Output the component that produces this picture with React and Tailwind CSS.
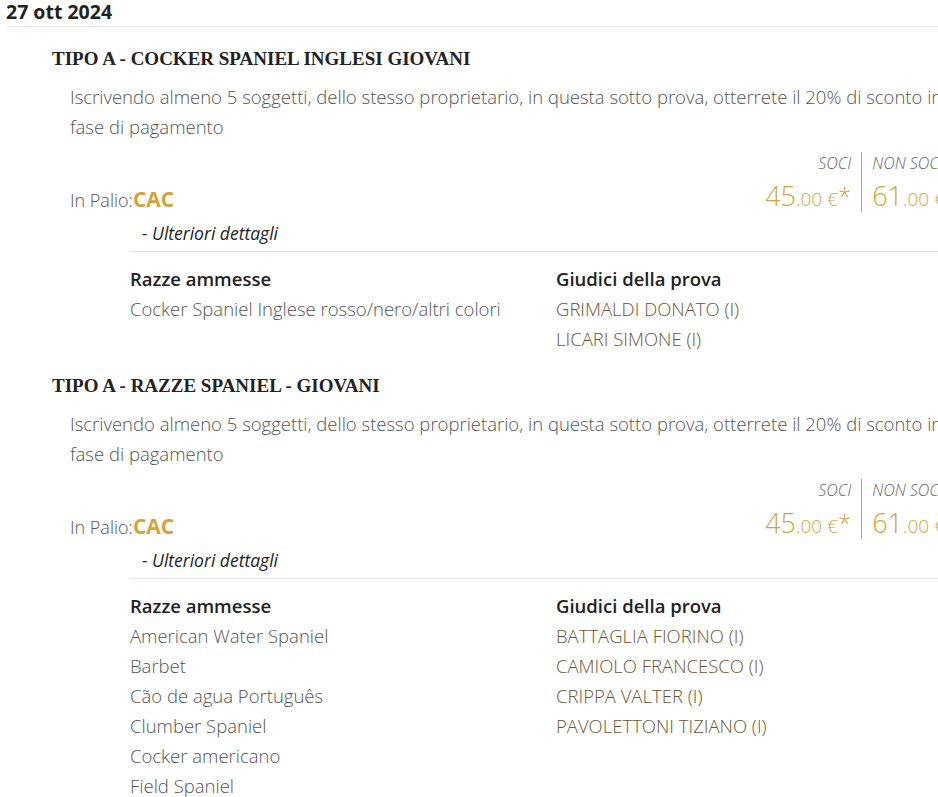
import React from 'react'

const sections = [
  {
    title: 'TIPO A - COCKER SPANIEL INGLESI GIOVANI',
    prize: 'CAC',
    soci: '45',
    nonSoci: '61',
    breeds: ['Cocker Spaniel Inglese rosso/nero/altri colori'],
    judges: ['GRIMALDI DONATO (I)', 'LICARI SIMONE (I)'],
  },
  {
    title: 'TIPO A - RAZZE SPANIEL - GIOVANI',
    prize: 'CAC',
    soci: '45',
    nonSoci: '61',
    breeds: [
      'American Water Spaniel',
      'Barbet',
      'Cão de agua Português',
      'Clumber Spaniel',
      'Cocker americano',
      'Field Spaniel',
    ],
    judges: [
      'BATTAGLIA FIORINO (I)',
      'CAMIOLO FRANCESCO (I)',
      'CRIPPA VALTER (I)',
      'PAVOLETTONI TIZIANO (I)',
    ],
  },
]

const Section = ({ data }) => (
  <section className="pl-[52px] pt-[19px]">
    <h3 className="text-[19px] leading-[26px] font-bold text-[#222] whitespace-nowrap" style={{ fontFamily: '"Liberation Serif", "DejaVu Serif", serif' }}>
      {data.title}
    </h3>
    <div className="pl-[18px] pt-[10px] text-[18.5px] leading-[30px] font-light text-[#555]">
      <p className="whitespace-nowrap">
        Iscrivendo almeno 5 soggetti, dello stesso proprietario, in questa sotto prova, otterrete il 20% di sconto in
        <br />
        fase di pagamento
      </p>
    </div>

    {/* In palio + prezzi */}
    <div className="flex items-end justify-between pl-[18px] pt-[10px]">
      <div className="flex items-baseline leading-[24px]">
        <span className="text-[18px] font-light text-[#555]">In Palio:</span>
        <span className="text-[21px] font-bold text-[#d4a43a]">{data.prize}</span>
      </div>
      <div className="flex h-[60px]">
        <div className="pr-[10px] flex flex-col items-end">
          <span className="pt-[1px] text-[16px] leading-[20px] italic font-light text-[#666] whitespace-nowrap">SOCI</span>
          <div className="mt-[7px] h-[32px] text-[#d4a43a] font-light leading-[32px] whitespace-nowrap">
            <span className="text-[27px]">{data.soci}</span>
            <span className="text-[19px]">.00 €</span>
            <span className="text-[24px] align-top leading-none relative top-[4px]">*</span>
          </div>
        </div>
        <div className="border-l border-[#d4a43a] pl-[10px] flex flex-col items-start">
          <span className="pt-[1px] text-[16px] leading-[20px] italic font-light text-[#666] whitespace-nowrap">NON SOCI</span>
          <div className="mt-[7px] h-[32px] text-[#d4a43a] font-light leading-[32px] whitespace-nowrap">
            <span className="text-[27px]">{data.nonSoci}</span>
            <span className="text-[19px]">.00 €</span>
          </div>
        </div>
      </div>
    </div>

    <div className="ml-[78px]">
      <div className="pl-[12px] pt-[9px] pb-[6px] text-[17.5px] leading-[24px] italic text-[#222]">
        - Ulteriori dettagli
      </div>
      <div className="border-t border-[#e4e4e4] pt-[12px] grid grid-cols-[426px_1fr]">
        <div>
          <h4 className="text-[18.5px] leading-[30px] font-semibold text-[#222]">Razze ammesse</h4>
          {data.breeds.map((b) => (
            <div key={b} className="text-[18.5px] leading-[30px] font-light text-[#555]">{b}</div>
          ))}
        </div>
        <div>
          <h4 className="text-[18.5px] leading-[30px] font-semibold text-[#222]">Giudici della prova</h4>
          {data.judges.map((j) => (
            <div key={j} className="text-[18.5px] leading-[30px] font-light text-[#6b5634]">{j}</div>
          ))}
        </div>
      </div>
    </div>
  </section>
)

export default function App() {
  return (
    <div className="w-[938px] h-[797px] overflow-hidden bg-white" style={{ fontFamily: '"Open Sans", "Noto Sans", sans-serif' }}>
      <div className="w-[945px]">
        <div className="ml-[6px] border-b border-[#e6e6e6] pb-[2px]">
          <h2 className="text-[19.5px] leading-[24px] font-bold text-[#222]">27 ott 2024</h2>
        </div>
        {sections.map((s) => (
          <Section key={s.title} data={s} />
        ))}
      </div>
    </div>
  )
}
